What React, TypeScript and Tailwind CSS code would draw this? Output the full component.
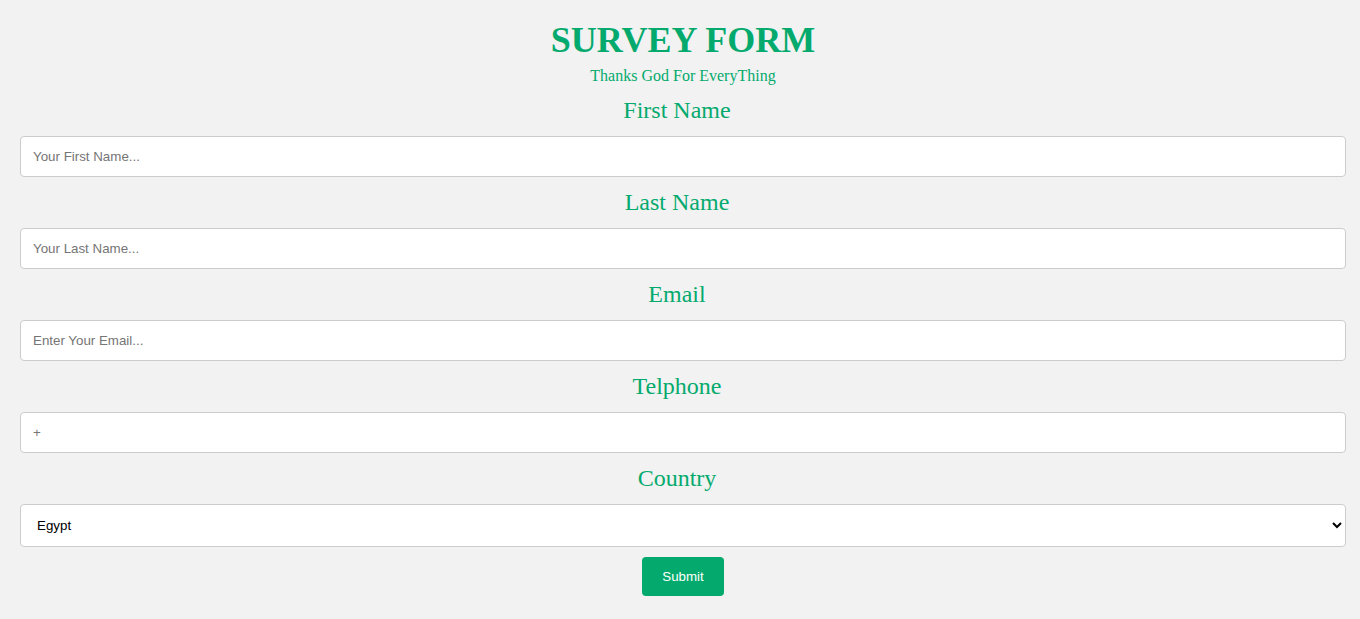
import { useState } from "react";

const fields = [
  { label: "First Name", placeholder: "Your First Name...", type: "text" },
  { label: "Last Name", placeholder: "Your Last Name...", type: "text" },
  { label: "Email", placeholder: "Enter Your Email...", type: "email" },
  { label: "Telphone", placeholder: "+", type: "tel" },
];

export default function App() {
  const [country, setCountry] = useState("Egypt");

  return (
    <div className="min-h-[619px] bg-[#f2f2f2] pl-[20px] pr-[14px] pt-[20px] pb-[23px] font-['Liberation_Serif',serif]">
      <h1 className="text-center text-[36px] leading-[41px] font-bold text-[#04aa6d]">
        SURVEY FORM
      </h1>
      <p className="mt-[6px] text-center text-[16px] leading-[18px] text-[#04aa6d]">
        Thanks God For EveryThing
      </p>

      <form className="mt-[11px]" onSubmit={(e) => e.preventDefault()}>
        {fields.map((f, i) => (
          <div key={f.label}>
            <label
              className={`block pr-[12px] text-center text-[24px] leading-[28px] text-[#04aa6d] mb-[12px] ${
                i === 0 ? "" : "mt-[11px]"
              }`}
            >
              {f.label}
            </label>
            <input
              type={f.type}
              placeholder={f.placeholder}
              className="block h-[41px] w-full rounded-[4px] border border-[#cccccc] bg-white px-[12px] font-['Liberation_Sans',Arial,sans-serif] text-[13.333px] text-black placeholder:text-[#757575] outline-none"
            />
          </div>
        ))}

        <label className="mt-[11px] mb-[12px] block pr-[12px] text-center text-[24px] leading-[28px] text-[#04aa6d]">
          Country
        </label>
        <select
          value={country}
          onChange={(e) => setCountry(e.target.value)}
          className="block h-[43px] w-full rounded-[4px] border border-[#cccccc] bg-white px-[12px] font-['Liberation_Sans',Arial,sans-serif] text-[13.333px] text-black"
        >
          <option>Egypt</option>
          <option>Saudi Arabia</option>
          <option>Palestine</option>
          <option>Other</option>
        </select>

        <div className="mt-[10px] flex justify-center">
          <button
            type="submit"
            className="h-[39px] w-[82px] rounded-[4px] bg-[#04aa6d] font-['Liberation_Sans',Arial,sans-serif] text-[13.333px] font-medium text-white"
          >
            Submit
          </button>
        </div>
      </form>
    </div>
  );
}
